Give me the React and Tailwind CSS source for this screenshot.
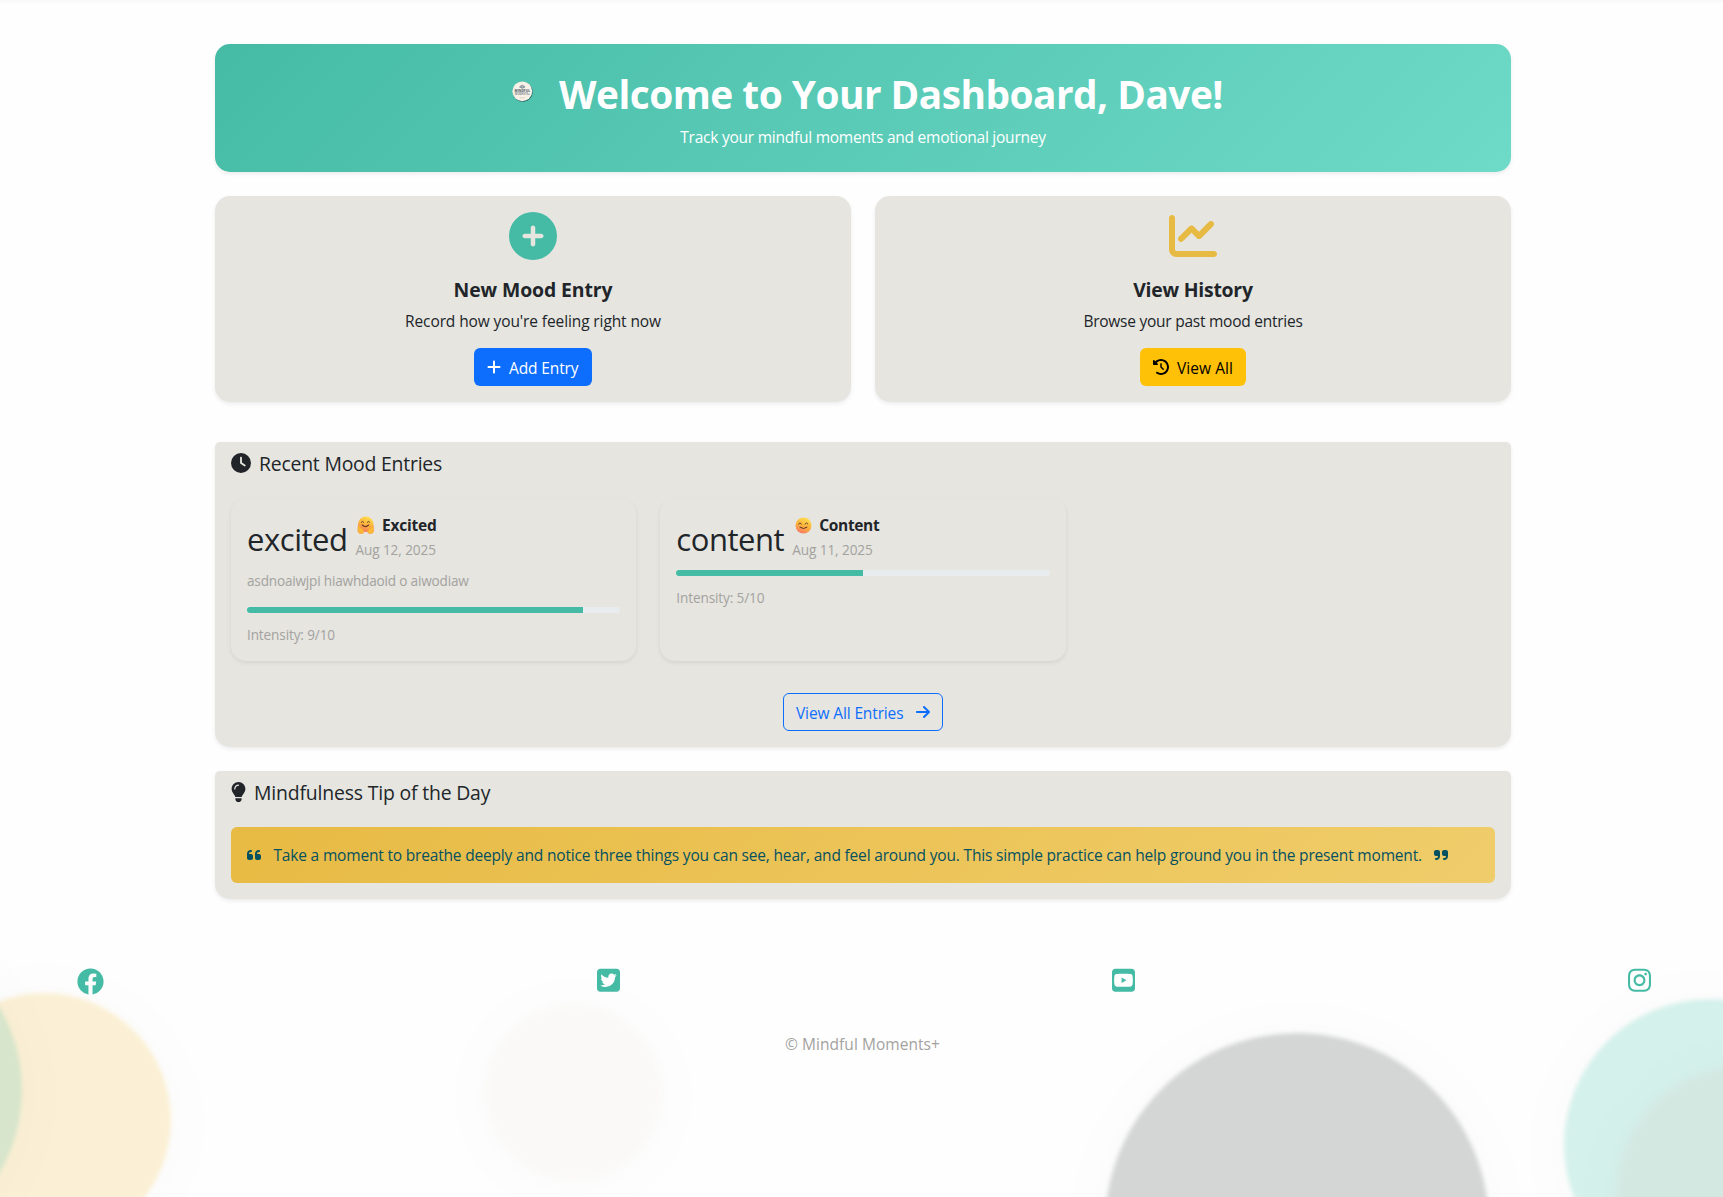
import React from "react";
import {
  FaCirclePlus,
  FaChartLine,
  FaPlus,
  FaClockRotateLeft,
  FaClock,
  FaArrowRight,
  FaLightbulb,
  FaQuoteLeft,
  FaQuoteRight,
  FaSquareTwitter,
  FaSquareYoutube,
  FaInstagram,
} from "react-icons/fa6";
import { FaFacebook } from "react-icons/fa";

const cardShadow = "shadow-[0_2px_4px_rgba(0,0,0,0.075)]";

function Logo() {
  return (
    <svg viewBox="0 0 42 42" className="size-[21px]">
      <circle cx="21.6" cy="21.8" r="20" fill="#2f6f68" />
      <circle cx="20.6" cy="20.6" r="19.8" fill="#f8f1e8" />
      <path d="M15 12q5.600-7 11.200 0q-5.600 5-11.200 0zM18 10.500q2.600 3 5.200 0" fill="#a9b4ba" stroke="#6d7c86" strokeWidth="1.200" />
      <text x="20.600" y="22.500" textAnchor="middle" fontSize="7.400" fontWeight="700" fill="#44505f" letterSpacing="0" textLength="31" lengthAdjust="spacingAndGlyphs">MINDFUL</text>
      <text x="20.600" y="28.300" textAnchor="middle" fontSize="5.600" fontWeight="600" fill="#66727e" letterSpacing="0" textLength="30" lengthAdjust="spacingAndGlyphs">MOMENTS+</text>
      <path d="M15.500 33.500h10" stroke="#d9b9a8" strokeWidth="1.200" />
    </svg>
  );
}

function FaceGradient({ id }) {
  return (
    <defs>
      <linearGradient id={id} x1="0.7" y1="0" x2="0.3" y2="1">
        <stop offset="0" stopColor="#ffdf4f" />
        <stop offset="0.55" stopColor="#fdb03c" />
        <stop offset="1" stopColor="#f5766a" />
      </linearGradient>
    </defs>
  );
}

function HugEmoji() {
  return (
    <svg viewBox="0 0 35 36" className="h-[18px] w-[17.5px]">
      <FaceGradient id="hug" />
      <circle cx="17.500" cy="16.500" r="15.500" fill="url(#hug)" />
      <path d="M8.500 12.500q2.500-4 5 0M20.500 12.500q2.500-4 5 0" fill="none" stroke="#5a3a2e" strokeWidth="2" strokeLinecap="round" />
      <path d="M10.500 18q6.500 6.500 13 0" fill="none" stroke="#6a3a2a" strokeWidth="2.200" strokeLinecap="round" />
      <path d="M2 20q2-3 4 1l2 3q6 2 6 8q-1 3.500-6 3.500q-5.500 0-6.500-6z" fill="#fdb834" stroke="#f08a3c" strokeWidth="0.800" />
      <path d="M33 20q-2-3-4 1l-2 3q-6 2-6 8q1 3.500 6 3.500q5.500 0 6.500-6z" fill="#fdb834" stroke="#f08a3c" strokeWidth="0.800" />
    </svg>
  );
}

function SmileEmoji() {
  return (
    <svg viewBox="0 0 34 34" className="size-[17px]">
      <FaceGradient id="smile" />
      <circle cx="17" cy="17" r="16" fill="url(#smile)" />
      <path d="M7 14q3-5 6 0M20 14q3-5 6 0" fill="none" stroke="#5a3a2e" strokeWidth="1.900" strokeLinecap="round" />
      <path d="M10 20.500q7 5.500 14 0" fill="none" stroke="#5a2f2a" strokeWidth="2" strokeLinecap="round" />
    </svg>
  );
}

function Bubbles() {
  return (
    <div className="pointer-events-none absolute inset-0 -z-10 overflow-hidden">
      <div className="absolute left-[-83px] top-[993px] size-[254px] rounded-full bg-[#fbf0d5] shadow-[0_4px_80px_rgba(0,0,0,0.025)] blur-[2px]" />
      <div className="absolute left-[-306px] top-[926px] size-[328px] rounded-full bg-[#45bba5]/20 shadow-[0_4px_80px_rgba(0,0,0,0.025)] blur-[2px]" />
      <div className="absolute left-[486px] top-[1005px] size-[175px] rounded-full bg-[#faf9f7] shadow-[0_4px_80px_rgba(0,0,0,0.025)] blur-[3px]" />
      <div className="absolute left-[1105px] top-[1033px] size-[384px] rounded-full bg-[#d4d6d5] shadow-[0_4px_80px_rgba(0,0,0,0.025)] blur-[2px]" />
      <div className="absolute left-[1564px] top-[999px] size-[292px] rounded-full bg-[#d5f1eb] shadow-[0_4px_80px_rgba(0,0,0,0.025)] blur-[2px]" />
      <div className="absolute left-[1616px] top-[1066px] size-[258px] rounded-full bg-[#d4e8e2] shadow-[0_4px_80px_rgba(0,0,0,0.025)] blur-[3px]" />
    </div>
  );
}

function ActionCard({ icon, title, titleClass, text, textClass, children }) {
  return (
    <div className={"flex h-[206px] flex-1 flex-col items-center rounded-[15px] bg-[#e6e5e0] p-4 " + cardShadow}>
      {icon}
      <h5 className={"mt-4 translate-y-[2px] text-[19.4px] font-bold leading-6 " + titleClass}>{title}</h5>
      <p className={"mt-2 translate-y-px leading-6 " + textClass}>{text}</p>
      {children}
    </div>
  );
}

function MoodCard({ word, wordClass, emoji, name, nameClass, date, note, value }) {
  return (
    <div className={"h-[163px] rounded-[15px] p-4 " + cardShadow}>
      <div className="flex h-12 items-center">
        <span className={"mr-2 shrink-0 translate-y-px text-[31px] leading-[48px] " + wordClass}>{word}</span>
        <div>
          <div className="flex h-5 -translate-y-px items-center">
            {emoji}
            <span className={"text-[15.5px] font-bold leading-5 " + nameClass}>{name}</span>
          </div>
          <div className="translate-y-[2px] text-[13.6px] leading-6 tracking-[-0.1px] text-[#a3a29f]">{date}</div>
        </div>
      </div>
      {note && <p className="mb-4 mt-2 text-[13.6px] leading-[21px] tracking-[-0.19px] text-[#a3a29f]">{note}</p>}
      <div className={"h-1.5 overflow-hidden rounded-[6px] bg-[#e9ecef] " + (note ? "" : "mt-2")}>
        <div className="h-full bg-[#45bba5]" style={{ width: `${value * 10}%` }} />
      </div>
      <div className="mt-2 translate-y-[2px] text-[13.6px] leading-6 tracking-[-0.13px] text-[#a3a29f]">Intensity: {value}/10</div>
    </div>
  );
}

export default function App() {
  return (
    <div className="relative isolate h-[1197px] overflow-hidden bg-[#fefefe] font-['Open_Sans','Noto_Sans',sans-serif] text-[15.5px] text-[#212529]">
      <Bubbles />
      <div className="h-1 bg-linear-to-b from-[#f8f8f8] to-[#fefefe]" />
      <main className="ml-[215px] mt-10 w-[1296px]">
        <header className={"h-32 rounded-[15px] bg-[linear-gradient(135deg,#45bba5,#6edac8)] pt-6 text-center text-white " + cardShadow}>
          <h1 className="flex h-12 items-center justify-center text-[38.8px] font-bold leading-[48px] tracking-[-0.51px]">
            <span className="mr-[18px] flex w-[38px] -translate-y-px justify-center">
              <Logo />
            </span>
            <span className="translate-y-[2px]">Welcome to Your Dashboard, Dave!</span>
          </h1>
          <p className="mt-2 translate-y-px leading-6 tracking-[-0.24px]">Track your mindful moments and emotional journey</p>
        </header>

        <div className="mt-6 flex gap-6">
          <ActionCard
            icon={<FaCirclePlus className="size-12 shrink-0 text-[#45bba5]" />}
            title="New Mood Entry"
            titleClass="tracking-[-0.11px]"
            text="Record how you're feeling right now"
            textClass="tracking-[-0.11px]"
          >
            <button className="mt-4 flex h-[38px] w-[118px] items-center rounded-md bg-[#0d6efd] pl-[13px] text-white">
              <FaPlus className="mr-2 h-4 w-3.5" />
              <span className="translate-y-[2px] tracking-[-0.12px]">Add Entry</span>
            </button>
          </ActionCard>
          <ActionCard
            icon={<FaChartLine className="size-12 shrink-0 text-[#e7ba43]" />}
            title="View History"
            titleClass="tracking-[-0.23px]"
            text="Browse your past mood entries"
            textClass="tracking-[-0.25px]"
          >
            <button className="mt-4 flex h-[38px] w-[106px] items-center rounded-md bg-[#ffc107] pl-[13px] text-black">
              <FaClockRotateLeft className="mr-2 size-4" />
              <span className="translate-y-[2px] tracking-[0.06px]">View All</span>
            </button>
          </ActionCard>
        </div>

        <section className={"mt-10 h-[305px] rounded-b-[15px] rounded-t-[5px] bg-[#e6e5e0] px-4 pt-2 " + cardShadow}>
          <h5 className="flex h-6 items-center text-[19.4px] leading-6 tracking-[-0.21px]">
            <FaClock className="mr-2 size-5 translate-y-px" />
            <span className="translate-y-[2px]">Recent Mood Entries</span>
          </h5>
          <div className="mt-6 grid grid-cols-3 gap-6">
            <MoodCard
              word="excited"
              wordClass="w-[100.5px] tracking-[-0.45px]"
              emoji={<span className="ml-[1.5px] mr-[7.5px]"><HugEmoji /></span>}
              name="Excited"
              nameClass="tracking-[-0.2px]"
              date="Aug 12, 2025"
              note="asdnoaiwjpi hiawhdaoid o aiwodiaw"
              value={9}
            />
            <MoodCard
              word="content"
              wordClass="w-[108px] tracking-[-0.45px]"
              emoji={<span className="ml-[3px] mr-[7px]"><SmileEmoji /></span>}
              name="Content"
              nameClass="tracking-[-0.35px]"
              date="Aug 11, 2025"
              value={5}
            />
          </div>
          <button className="mx-auto mt-8 flex h-[38px] w-[160px] items-center rounded-md border border-[#0d6efd] pl-3 text-[#0d6efd]">
            <span className="w-[107px] translate-y-[2px] whitespace-nowrap tracking-[-0.13px]">View All Entries</span>
            <FaArrowRight className="ml-[13px] h-4 w-3.5" />
          </button>
        </section>

        <section className={"mt-6 h-32 rounded-b-[15px] rounded-t-[5px] bg-[#e6e5e0] px-4 pt-2 " + cardShadow}>
          <h5 className="flex h-6 items-center text-[19.4px] leading-6 tracking-[-0.17px]">
            <FaLightbulb className="mr-2 h-5 w-[15px] translate-y-px" />
            <span className="translate-y-[2px]">Mindfulness Tip of the Day</span>
          </h5>
          <div className="mt-6 flex h-14 items-center rounded-md bg-[linear-gradient(135deg,#e7ba43,#f0cd6b)] px-4 text-[#055160]">
            <FaQuoteLeft className="mr-[12.5px] h-4 w-3.5" />
            <span className="w-[1160.5px] translate-y-px whitespace-nowrap tracking-[-0.18px]">
              Take a moment to breathe deeply and notice three things you can see, hear, and feel around you. This simple practice can help ground you in the present moment.
            </span>
            <FaQuoteRight className="h-4 w-3.5" />
          </div>
        </section>
      </main>

      <footer>
        <div className="mt-[68px] flex items-start justify-between pl-[77px] pr-[72px] text-[#45bba5]">
          <FaFacebook className="mt-[0.5px] size-[27px]" />
          <FaSquareTwitter className="h-[26.5px] w-[23px]" />
          <FaSquareYoutube className="h-[26.5px] w-[23px]" />
          <FaInstagram className="h-[26.5px] w-[23px]" />
        </div>
        <p className="ml-[2px] mt-[37.5px] text-center leading-6 tracking-[0.05px] text-[#a3a29f]">© Mindful Moments+</p>
      </footer>
    </div>
  );
}
